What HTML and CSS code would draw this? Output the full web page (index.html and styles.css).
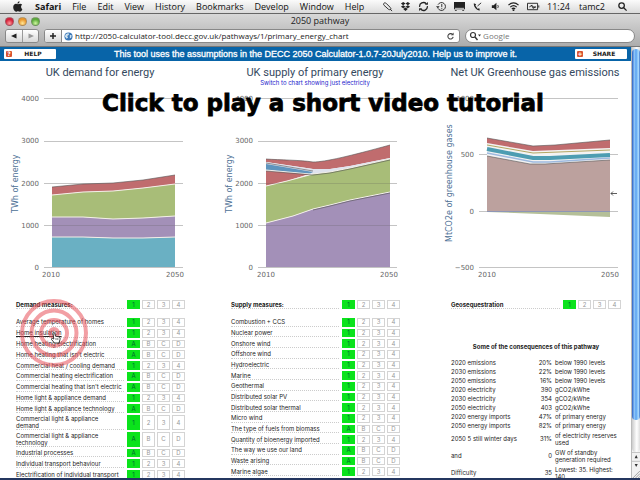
FILE: index.html
```
<!DOCTYPE html>
<html lang="en">
<head>
<meta charset="utf-8">
<title>2050 pathway</title>
<link rel="stylesheet" href="styles.css">
</head>
<body>
<nav class="menubar" aria-label="Menu bar">
  <svg class="apple" viewBox="0 0 12 12" aria-hidden="true"><path d="M8.2 0.3C8.3 1.7 7.3 2.8 6 2.9 5.9 1.600 6.900.500 8.200.3ZM9.900 6.300C9.900 5.200 10.500 4.500 11.100 4.100 10.500 3.300 9.700 3 8.900 3 7.900 3 7.200 3.500 6.600 3.500 6 3.500 5.300 3 4.400 3 2.800 3 1.300 4.400 1.300 6.800 1.300 9.200 3 11.700 4.400 11.700 5.200 11.700 5.600 11.200 6.600 11.200 7.500 11.200 7.900 11.700 8.700 11.700 9.900 11.700 10.900 10.100 11.300 8.900 10.500 8.500 9.900 7.600 9.900 6.300Z"/></svg>
  <div class="menus">
    <a href="#" class="app">Safari</a><a href="#">File</a><a href="#">Edit</a><a href="#">View</a><a href="#">History</a><a href="#">Bookmarks</a><a href="#">Develop</a><a href="#">Window</a><a href="#">Help</a>
  </div>
  <div class="status">
    <svg viewBox="0 0 12 12" aria-hidden="true"><path d="M2 4.500C1 2.500 3 1 5 3L9 7C11 9.500 8.500 10 7 9ZM9 9l2 2" class="ln"/></svg>
    <svg viewBox="0 0 12 12" aria-hidden="true"><path d="M3.500 1 6 2.800 3.400 4.500 1 2.800ZM8.500 1 11 2.800 8.600 4.500 6 2.800ZM3.400 4.500 6 6.300 3.500 8 1 6.200ZM8.600 4.500 11 6.200 8.500 8 6 6.300ZM6 7 8.500 8.800 6 10.800 3.500 8.800Z"/></svg>
    <svg viewBox="0 0 12 12" aria-hidden="true"><path d="M1.800 6.500A4.200 4.200 0 0 1 9 3M10.200 5.500A4.200 4.200 0 0 1 3 9" class="ln thick"/><path d="M7.500 4.200H10.800V1ZM4.500 7.800H1.200V11Z"/></svg>
    <svg viewBox="0 0 12 12" aria-hidden="true"><path d="M2.200 4A4.300 4.300 0 1 1 2.200 8M6.300 3.300V6.500M6.300 7.500V8.500" class="ln"/><path d="M0 5.800H4L2 8Z"/></svg>
    <svg viewBox="0 0 12 12" aria-hidden="true"><path d="M0 1H12V9H0ZM1 10H3V11H1ZM9 10H11V11H9Z"/><path d="M1 8H11" stroke="#ddd"/></svg>
    <svg viewBox="0 0 12 12" aria-hidden="true"><path d="M2 2.500C1.500 6 5 10.500 8.500 10.300L8 8 6 8.500 3.700 5 4.500 3.500Z"/><path d="M6 5.500 10 2" class="ln"/></svg>
    <svg viewBox="0 0 12 12" aria-hidden="true"><path d="M2 4.500H4L7 2V10L4 7.500H2Z"/><path d="M8.500 4.500Q9.500 6 8.500 7.500" class="ln"/></svg>
    <svg viewBox="0 0 12 12" aria-hidden="true"><path d="M.5 4.500Q6-.5 11.500 4.500M2.500 6.700Q6 3.500 9.500 6.700M4.200 8.800Q6 7 7.800 8.800" class="ln thick"/><circle cx="6" cy="10" r="1"/></svg>
    <svg viewBox="0 0 14 12" class="wide" aria-hidden="true"><path d="M1 2.500H12V9.500H1ZM13.300 4.800V7.200M3 6.500 6 4.500V6.500H10L7 8V6.300" class="ln"/></svg>
    <span class="clock">11:24</span><span class="user">tamc2</span>
    <svg viewBox="0 0 12 12" aria-hidden="true"><circle cx="5" cy="5" r="3" class="ln thick"/><path d="M7.300 7.300 10.500 10.500" class="ln thick"/></svg>
  </div>
</nav>

<header class="window">
  <div class="titlebar">
    <div class="lights"><i class="red"></i><i class="amber"></i><i class="green"></i></div>
    <span>2050 pathway</span>
  </div>
  <div class="toolbar">
    <div class="history"><button type="button" aria-label="Back"><svg viewBox="0 0 8 8"><path d="M6.500 1.500V6.500L1 4Z" fill="#222"/></svg></button><button type="button" aria-label="Forward"><svg viewBox="0 0 8 8"><path d="M1.500 1.500V6.500L7 4Z" fill="#999"/></svg></button></div>
    <div class="address">
      <button type="button" aria-label="Add bookmark"><svg viewBox="0 0 8 8"><path d="M4 1V7M1 4H7" stroke="#222" stroke-width="1.500"/></svg></button>
      <svg class="globe" viewBox="0 0 10 10" aria-hidden="true"><circle cx="5" cy="5" r="4.500" fill="#3b78b8"/><path d="M2 2.500 5 1 5.500 3 3.500 4.500 4.500 6 3 7.500 1 5ZM6.500 3 8.500 3.500 8 6.500 6.500 7Z" fill="#cfe2ee"/></svg>
      <input type="text" aria-label="Address" value="http://2050-calculator-tool.decc.gov.uk/pathways/1/primary_energy_chart">
      <svg class="reload" viewBox="0 0 10 10" aria-hidden="true"><path d="M7.500 3A3 3 0 1 0 8 5.500" fill="none" stroke="#444" stroke-width="1.200"/><path d="M5.500 3.500H8.500V.5Z" fill="#444"/></svg>
    </div>
    <div class="search">
      <svg viewBox="0 0 13 10" aria-hidden="true"><circle cx="4" cy="4" r="2.500" fill="none" stroke="#333" stroke-width="1.200"/><path d="M6 6 8.500 9" stroke="#333" stroke-width="1.400"/><path d="M9 3.500H12L10.500 5.500Z" fill="#333"/></svg>
      <input type="text" aria-label="Search" placeholder="Google">
    </div>
  </div>
</header>

<div class="viewport">
  <main class="page">
    <div class="notice">
      <button type="button" class="pill"><b>?</b><span>HELP</span></button>
      <p>This tool uses the assumptions in the DECC 2050 Calculator-1.0.7-20July2010. Help us to improve it.</p>
      <button type="button" class="pill"><b>+</b><span>SHARE</span></button>
    </div>

    <div class="columns charts">
      <section>
        <h2>UK demand for energy</h2>
        <svg class="chart" viewBox="0 90 215 200" role="img" aria-label="UK demand for energy">
          <path class="grid" d="M44 98.500H183M44 141.500H183M44 183.500H183M44 225.500H183M44 267.500H183"/>
          <path class="teal" d="M52 237 83 237 113 238 143 238 175 237V267H52Z"/>
          <path class="purple" d="M52 217 83 217 113 219 143 218 175 216V237L143 238 113 238 83 237 52 237Z"/>
          <path class="olive" d="M52 195 83 192 113 191 143 188 175 184V216L143 218 113 219 83 217 52 217Z"/>
          <path class="rose" d="M52 187 83 184 113 183 143 180 175 175V184L143 188 113 191 83 192 52 195Z"/>
          <path class="edge" d="M52 195 83 192 113 191 143 188 175 184M52 217 83 217 113 219 143 218 175 216M52 237 83 237 113 238 143 238 175 237"/>
          <path class="shade" d="M52 187 83 184 113 183 143 180 175 175"/>
          <path class="over" d="M52 225.500H175"/>
          <g class="ticks"><text x="39" y="101">4000</text><text x="39" y="143">3000</text><text x="39" y="186">2000</text><text x="39" y="228">1000</text><text x="39" y="270">0</text></g>
          <g class="years"><text x="51" y="277">2010</text><text x="175" y="277">2050</text></g>
          <text class="axis" transform="translate(18 213) rotate(-90)">TWh of energy</text>
        </svg>
      </section>
      <section>
        <h2>UK supply of primary energy</h2>
        <a class="switch" href="#">Switch to chart showing just electricity</a>
        <svg class="chart" viewBox="215 90 215 200" role="img" aria-label="UK supply of primary energy">
          <path class="grid" d="M258 98.500H397M258 141.500H397M258 183.500H397M258 225.500H397M258 267.500H397"/>
          <path class="rose" d="M266 159C280 160 300 160 313 162 325 162 350 156 390 145V158L350 166 330 169 313 169 266 162Z"/>
          <path fill="#dfe3ee" d="M266 162 313 169 330 169 350 166 390 158V160L350 168 330 172 313 174 266 165Z"/>
          <path class="blue" d="M266 164 313 172 309 174 266 170Z"/>
          <path class="rose" d="M266 171 309 174 287 181 266 186Z"/>
          <path class="olive" d="M266 186 287 181 313 174 330 172 350 168 390 159V192L350 200 330 205 313 209 293 216 266 223Z"/>
          <path class="purple" d="M266 223 293 216 313 209 330 205 350 200 390 192V267H266Z"/>
          <path class="edge" d="M266 170 310 174M266 186 287 181 313 174 330 172 350 168 390 159M266 223 293 216 313 209 330 205 350 200 390 192"/>
          <path class="shade" d="M266 159C280 160 300 160 313 162 325 162 350 156 390 145M266 163 313 171M266 171 313 175 330 173 350 169 390 160M313 210 330 206 350 201 390 193"/>
          <path class="over" d="M266 225.500H390M266 183.500H390"/>
          <g class="ticks"><text x="253" y="101">4000</text><text x="253" y="143">3000</text><text x="253" y="186">2000</text><text x="253" y="228">1000</text><text x="253" y="270">0</text></g>
          <g class="years"><text x="266" y="277">2010</text><text x="389" y="277">2050</text></g>
          <text class="axis" transform="translate(232 213) rotate(-90)">TWh of energy</text>
        </svg>
      </section>
      <section>
        <h2>Net UK Greenhouse gas emissions</h2>
        <svg class="chart" viewBox="430 90 201 186" role="img" aria-label="Net UK Greenhouse gas emissions">
          <path class="grid" d="M479 98.500H618M479 154.500H618M479 211.500H618M479 267.500H618"/>
          <path d="M487 143 533 151 610 148V164H533L487 158Z" fill="#f3f3f3"/>
          <path class="brown" d="M487 156 530 164 545 164 610 160V211H487Z"/>
          <path class="rose" d="M487 138 533 146 555 145 610 140V148L533 151 487 143Z"/>
          <path fill="none" stroke="#b3a763" d="M487 145 533 153 610 150"/>
          <path fill="none" stroke="#4d9db2" stroke-width="4" d="M487 149 533 158 550 158 610 155"/>
          <path fill="none" stroke="#9db9df" stroke-width="1.500" d="M487 153 533 162 550 162 610 158"/>
          <path class="shade" d="M487 138 533 146 555 145 610 140M487 156 530 164 545 164 610 160"/>
          <path fill="#b4bf98" d="M487 212H610V217L540 214Z"/>
          <path fill="none" stroke="#8e96b6" d="M487 211.500H610"/>
          <g class="ticks"><text x="474" y="101">1000</text><text x="474" y="157">500</text><text x="474" y="214">0</text><text x="474" y="270">−500</text></g>
          <g class="years"><text x="487" y="277">2010</text><text x="610" y="277">2050</text></g>
          <text class="axis" transform="translate(452 242) rotate(-90)">MtCO2e of greenhouse gases</text>
          <path d="M611 193.500H617M613 191.500 611 193.500 613 195.500" fill="none" stroke="#333" stroke-width=".8"/>
        </svg>
      </section>
    </div>

    <div class="columns measures">
      <section>
        <ul class="head" data-list="demandHead"></ul>
        <ul class="list demand" data-list="demand"></ul>
      </section>
      <section>
        <ul class="head" data-list="supplyHead"></ul>
        <ul class="list supply" data-list="supply"></ul>
      </section>
      <section class="last">
        <ul class="head" data-list="geo"></ul>
        <table>
          <caption>Some of the consequences of this pathway</caption>
          <tbody>
            <tr><th>2020 emissions</th><td>20%</td><td>below 1990 levels</td></tr>
            <tr><th>2030 emissions</th><td>22%</td><td>below 1990 levels</td></tr>
            <tr><th>2050 emissions</th><td>16%</td><td>below 1990 levels</td></tr>
            <tr><th>2020 electricity</th><td>390</td><td>gCO2/kWhe</td></tr>
            <tr><th>2030 electricity</th><td>354</td><td>gCO2/kWhe</td></tr>
            <tr><th>2050 electricity</th><td>403</td><td>gCO2/kWhe</td></tr>
            <tr><th>2020 energy imports</th><td>47%</td><td>of primary energy</td></tr>
            <tr><th>2050 energy imports</th><td>82%</td><td>of primary energy</td></tr>
            <tr class="two"><th>2050 5 still winter days</th><td>31%</td><td>of electricity reserves<br>used</td></tr>
            <tr class="two"><th>and</th><td>0</td><td>GW of standby<br>generation required</td></tr>
            <tr class="two"><th>Difficulty</th><td>35</td><td>Lowest: 35. Highest:<br>140</td></tr>
          </tbody>
        </table>
      </section>
    </div>
    <button type="button" class="play">Click to play a short video tutorial</button>
    <svg class="pointer" viewBox="0 0 70 70" aria-hidden="true">
      <g fill="none" stroke="#e8505a" stroke-opacity=".55" stroke-width="4"><circle cx="35" cy="35" r="32"/><circle cx="35" cy="35" r="22.500"/><circle cx="35" cy="35" r="13"/><circle cx="35" cy="35" r="4"/></g>
      <path d="M34 35.500C34 34.300 35.600 34.300 35.800 35.500L36.500 38.200 40 38.800C41.300 39.200 41.300 40.500 41 41.500L40 45H35.500L32.500 41.500C32 40.500 33.200 40 34 40.700L34.800 41Z" fill="#fff" stroke="#222" stroke-width=".9"/>
      <path d="M37 40V42M38.800 40V42" stroke="#222" stroke-width=".6"/>
    </svg>
  </main>
  <div class="scrollbar" aria-hidden="true">
    <div class="track"><div class="thumb"></div></div>
    <svg viewBox="0 0 9 20"><path d="M0 .5H9M0 10.500H9" stroke="#bbb"/><path d="M3 7H6.500L4.700 3.500ZM3 13.500H6.500L4.700 17Z" fill="#333"/></svg>
    <svg viewBox="0 0 9 9"><path d="M1 9 9 1M4 9 9 4M7 9 9 7" stroke="#999"/></svg>
  </div>
</div>
<script src="measures.js"></script>
</body>
</html>
```
FILE: styles.css
```
* { box-sizing: border-box; margin: 0; padding: 0; }
html, body { height: 100%; }
body {
  display: flex;
  flex-direction: column;
  overflow: hidden;
  background: #fff;
  border-bottom: 2px solid #24365f;
  font-family: Inter, Arial, sans-serif;
  color: #222;
}
button { border: 0; background: none; font: inherit; color: inherit; cursor: pointer; }
ul { list-style: none; }

.menubar {
  display: flex;
  align-items: center;
  justify-content: space-between;
  height: 14px;
  flex: none;
  padding: 0 12px;
  background: linear-gradient(#fbfbfb, #dadada);
  border-bottom: 1px solid #666;
  font: 9px/13px "Open Sans", "Noto Sans", sans-serif;
  color: #111;
}
.menubar a { color: inherit; text-decoration: none; }
.menubar svg { width: 11px; height: 11px; flex: none; fill: #222; }
.menubar svg.wide { width: 14px; }
.menubar .ln { fill: none; stroke: #222; stroke-width: 1; }
.menubar .thick { stroke-width: 1.4; }
.menus { display: flex; gap: 11px; margin: 0 auto 0 12px; }
.app { font-weight: 700; }
.status { display: flex; align-items: center; gap: 7px; }
.clock { margin-right: 2px; }
.user { margin-right: 5px; }

.window {
  flex: none;
  background: linear-gradient(#d8d8d8, #ababab);
  font: 9px/12px "Open Sans", "Noto Sans", sans-serif;
}
.titlebar { display: grid; grid-template-columns: 1fr auto 1fr; align-items: center; height: 14px; padding: 0 5px; }
.lights { display: flex; gap: 4px; }
.lights i { width: 9px; height: 9px; border-radius: 50%; border: 1px solid #7778; }
.red { background: radial-gradient(circle at 50% 75%, #ff9a9a, #d5203a 60%); }
.amber { background: radial-gradient(circle at 50% 75%, #ffe79a, #eb982c 60%); }
.green { background: radial-gradient(circle at 50% 75%, #d0f7a0, #5cab3c 60%); }
.toolbar { display: flex; align-items: flex-start; gap: 5px; height: 19px; padding: 1px 5px 0; border-bottom: 1px solid #777; }
.toolbar button { width: 17px; height: 12px; background: linear-gradient(#fff, #d8d8d8); }
.toolbar button svg { display: block; width: 8px; height: 8px; margin: auto; }
.history { display: flex; border: 1px solid #888; border-radius: 3px; overflow: hidden; }
.history button { width: 16px; }
.history button + button { border-left: 1px solid #999; }
.address { display: flex; align-items: center; flex: 422 1 0; height: 14px; border: 1px solid #888; border-radius: 3px; background: #fff; overflow: hidden; }
.address button { border-right: 1px solid #888; flex: none; }
.address input, .search input { flex: 1; min-width: 0; border: 0; outline: 0; background: none; font: inherit; font-size: 8px; color: #222; height: 12px; }
.globe { width: 9px; height: 9px; margin: 0 2px; flex: none; }
.reload { width: 9px; height: 9px; margin: 0 4px; flex: none; }
.search { display: flex; align-items: center; gap: 1px; flex: 165 1 0; height: 14px; padding: 0 3px; border: 1px solid #888; border-radius: 7px; background: #fff; }
.search svg { width: 13px; height: 10px; flex: none; }
.search input::placeholder { color: #777; opacity: 1; }

.viewport { display: flex; flex: 1; min-height: 0; }
.page { position: relative; flex: 1; min-width: 0; overflow: hidden; }
.notice { display: flex; align-items: center; justify-content: space-between; height: 14px; padding: 0 4px; background: #0864a8; color: #fff; }
.notice p { font-family: "Liberation Sans", Arial, sans-serif; font-size: 9px; line-height: 14px; -webkit-text-stroke: 0.3px #fff; }
.pill { display: flex; align-items: center; width: 52px; height: 10px; padding: 0 2px; background: #fff; border-radius: 1px; color: #222; font: 700 6px/8px "DejaVu Sans", sans-serif; }
.pill b { width: 6px; height: 6px; line-height: 6px; border-radius: 1px; background: #d9532f; color: #fff; }
.pill span { flex: 1; }

.columns { display: grid; grid-template-columns: 215fr 215fr 201fr; }
.charts section { display: flex; flex-direction: column; height: 229px; }
.charts h2 { padding: 5px 15px 0 0; height: 29px; text-align: center; font: 11px/14px Roboto, sans-serif; color: #34495e; }
.charts section:nth-child(3) h2 { padding: 5px 0 0 9px; }
.switch { height: 8px; margin-top: -11px; margin-bottom: 3px; padding-right: 15px; text-align: center; font-size: 6px; line-height: 8px; color: #22c; text-decoration: none; }
.chart { display: block; width: 100%; overflow: visible; }
.chart text { font: 7px "DejaVu Sans", sans-serif; fill: #666; }
.chart .axis { font-size: 8px; fill: #4d7095; }
.ticks { text-anchor: end; }
.years { text-anchor: middle; }
.grid { fill: none; stroke: #c4c4c4; }
.over { fill: none; stroke: #555; stroke-opacity: .22; }
.edge { fill: none; stroke: #f3efe8; stroke-width: 1; }
.shade { fill: none; stroke: #5559; stroke-width: 1; }
.teal { fill: #6ab0c3; }
.purple { fill: #a390b8; }
.olive { fill: #a8bd78; }
.rose { fill: #c06c6e; }
.blue { fill: #5f94bd; }
.brown { fill: #bca19e; }

.measures { font-size: 6px; line-height: 7px; }
.measures section { padding: 9px 30px 0 16px; }
.measures .last { padding: 9px 10px 0 21px; }
.head { height: 11px; display: flex; flex-direction: column; font-weight: 700; margin-bottom: 7px; }
.list { display: flex; flex-direction: column; }
.demand { height: 163px; }
.supply { height: 160px; }
.list li, .head li { flex: 3 1 0; min-height: 0; display: grid; grid-template-columns: 1fr repeat(4, 14px); column-gap: 1px; padding: 1px 0; }
.list li.tall { flex-grow: 5; }
.label { display: flex; align-items: center; min-width: 0; margin-right: 1px; border-bottom: 1px dotted #ccc; white-space: nowrap; }
.label a { color: inherit; text-decoration: none; }
.label a.active { text-decoration: underline; }
.level { border: 1px solid #d4d4d4; color: #999; line-height: 6px; margin-left: 1px; font-weight: 400; }
.level[aria-pressed="true"] { background: #0be31c; border-color: #0be31c; color: #063; }

table { width: 100%; border-collapse: collapse; margin-top: 32px; }
caption { font-weight: 700; line-height: 9px; padding-bottom: 7px; }
th, td { font-weight: 400; text-align: left; vertical-align: middle; height: 9px; padding: 0; line-height: 7px; }
th { width: 80px; }
td:nth-child(2) { text-align: right; width: 21px; }
td:last-child { padding-left: 3px; }
.two th, .two td { height: 17px; }

.play { position: absolute; left: 0; right: 0; top: 42px; padding-left: 15px; font: 700 23px/28px "DejaVu Sans", sans-serif; color: #000; -webkit-text-stroke: 0.8px #000; }
.pointer { position: absolute; left: 19px; top: 251px; width: 70px; height: 70px; }

.scrollbar { width: 9px; flex: none; display: flex; flex-direction: column; background: #f2f2f2; border-left: 1px solid #bbb; }
.track { flex: 1; background: linear-gradient(90deg, #ccc, #fff 60%, #ddd); border-radius: 0 0 4px 4px; padding-top: 2px; }
.thumb { height: 92%; border-radius: 5px; background: linear-gradient(90deg, #2a5fc4, #8fc6f8 30%, #5aa2f0 50%, #a9dcff 80%, #3a6fc8); }
.scrollbar svg { display: block; width: 100%; flex: none; }
```
FILE: measures.js
```
const levels = { 1: ["1", "2", "3", "4"], A: ["A", "B", "C", "D"] };
const lists = {
  demandHead: [["Demand measures:", "1"]],
  supplyHead: [["Supply measures:", "1"]],
  geo: [["Geosequestration", "1"]],
  demand: [
    ["Average temperature of homes", "1"],
    ["Home insulation", "1", "active"],
    ["Home heating electrification", "A"],
    ["Home heating that isn't electric", "A"],
    ["Commercial heat / cooling demand", "1"],
    ["Commercial heating electrification", "A"],
    ["Commercial heating that isn't electric", "A"],
    ["Home light & appliance demand", "1"],
    ["Home light & appliance technology", "A"],
    ["Commercial light & appliance\ndemand", "1"],
    ["Commercial light & appliance\ntechnology", "A"],
    ["Industrial processes", "A"],
    ["Individual transport behaviour", "1"],
    ["Electrification of individual transport", "1"]
  ],
  supply: [
    ["Combustion + CCS", "1"],
    ["Nuclear power", "1"],
    ["Onshore wind", "1"],
    ["Offshore wind", "1"],
    ["Hydroelectric", "1"],
    ["Marine", "1"],
    ["Geothermal", "1"],
    ["Distributed solar PV", "1"],
    ["Distributed solar thermal", "1"],
    ["Micro wind", "1"],
    ["The type of fuels from biomass", "A"],
    ["Quantity of bioenergy imported", "1"],
    ["The way we use our land", "A"],
    ["Waste arising", "A"],
    ["Marine algae", "1"]
  ]
};

document.querySelectorAll("[data-list]").forEach(ul => {
  lists[ul.dataset.list].forEach(([name, first, state]) => {
    const li = document.createElement("li");
    const label = document.createElement("div");
    label.className = "label";
    const link = document.createElement("a");
    link.href = "#";
    link.innerText = name;
    if (state) link.className = state;
    label.append(link);
    li.append(label);
    if (name.includes("\n")) li.className = "tall";
    levels[first].forEach((text, i) => {
      const button = document.createElement("button");
      button.type = "button";
      button.className = "level";
      button.textContent = text;
      button.setAttribute("aria-pressed", i === 0);
      li.append(button);
    });
    ul.append(li);
  });
});
```
